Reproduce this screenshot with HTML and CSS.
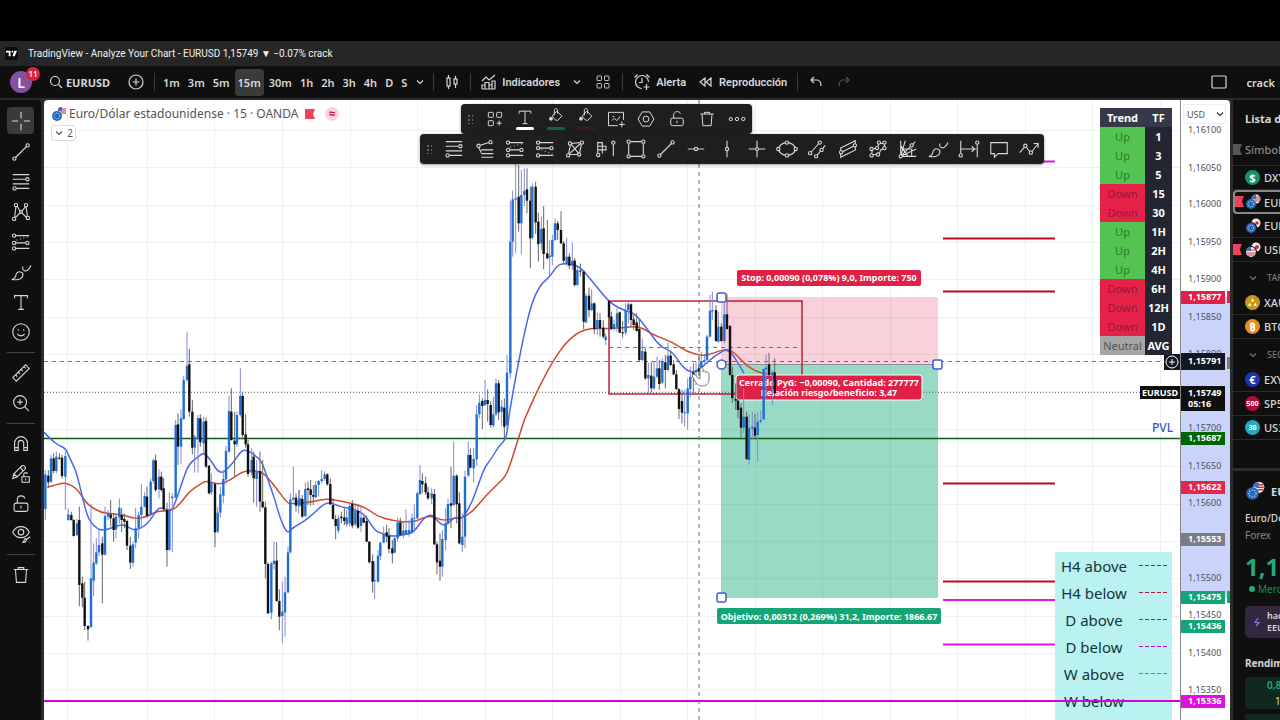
FILE: index.html
```html
<!DOCTYPE html>
<html lang="es">
<head>
    <meta charset="UTF-8">
    <meta name="viewport" content="width=device-width, initial-scale=1.0">
    <title>TradingView - Analyze Your Chart</title>
    <link rel="stylesheet" href="styles.css">
</head>
<body>
    <!-- Icon set -->
    <svg class="sprite" aria-hidden="true">
        <symbol id="i-chevron" viewBox="0 0 10 10"><path d="M2 3.5l3 3 3-3"/></symbol>
        <symbol id="i-line" viewBox="0 0 24 24"><path d="M6 18L18 6"/><circle cx="4.800" cy="19.200" r="1.800"/><circle cx="19.200" cy="4.800" r="1.800"/></symbol>
        <symbol id="i-fib" viewBox="0 0 24 24"><path d="M3 4h18M3 9h14M3 14h18M7 19h14"/><circle cx="19" cy="9" r="1.800"/><circle cx="5" cy="19" r="1.800"/></symbol>
        <symbol id="i-fibext" viewBox="0 0 24 24"><path d="M7 8l9-3M5 10l3 6M8 13h13M8 17h13M8 21h13"/><circle cx="5" cy="8.500" r="1.800"/><circle cx="18" cy="4.500" r="1.800"/></symbol>
        <symbol id="i-pattern" viewBox="0 0 24 24"><path d="M5 18L6.500 6M8 6l3 5M13 13l5 5M6 18l5-5M13 11l4-5M17.500 6.500L19 17"/><circle cx="4.500" cy="19.500" r="1.800"/><circle cx="6.500" cy="4.500" r="1.800"/><circle cx="17.500" cy="4.500" r="1.800"/><circle cx="19.500" cy="18.500" r="1.800"/><circle cx="12" cy="12" r="1.500"/></symbol>
        <symbol id="i-long" viewBox="0 0 24 24"><path d="M6 5h15M6 13h11M6 19h15"/><path stroke-dasharray="1 3" d="M7 10l13-4"/><circle cx="4.500" cy="5" r="1.800"/><circle cx="4.500" cy="13" r="1.800"/><circle cx="19" cy="13" r="1.800"/><circle cx="4.500" cy="19" r="1.800"/></symbol>
        <symbol id="i-short" viewBox="0 0 24 24"><path d="M6 5h15M6 11h11M6 19h15"/><path stroke-dasharray="1 3" d="M8 13l12 4"/><circle cx="4.500" cy="5" r="1.800"/><circle cx="4.500" cy="11" r="1.800"/><circle cx="19" cy="11" r="1.800"/><circle cx="4.500" cy="19" r="1.800"/></symbol>
        <symbol id="i-brush" viewBox="0 0 24 24"><path d="M2 20c4 0 4-4 5-6 2-4 8-2 7 2-1 4-6 5-12 4zM14 6c-1 4 2 6 5 4 2-1 3-3 4-5"/></symbol>
        <symbol id="i-text" viewBox="0 0 24 24"><path d="M5 8V5h14v3M12 5v15M9 20h6"/></symbol>
        <symbol id="i-smile" viewBox="0 0 24 24"><circle cx="12" cy="12" r="9"/><path d="M8 14c1.500 3 6.500 3 8 0M9 9v1.500M15 9v1.500"/></symbol>
        <symbol id="i-ruler" viewBox="0 0 24 24"><path d="M3 17L17 3l4 4L7 21zM6 14l2 2M9 11l2 2M12 8l2 2M15 5l2 2"/></symbol>
        <symbol id="i-zoom" viewBox="0 0 24 24"><circle cx="11" cy="11" r="7"/><path d="M16 16l4.500 4.500M11 8v6M8 11h6"/></symbol>
        <symbol id="i-magnet" viewBox="0 0 24 24"><path d="M5 19v-8a7 7 0 0 1 14 0v8h-4v-8a3 3 0 0 0-6 0v8zM5 16h4M15 16h4"/></symbol>
        <symbol id="i-pencillock" viewBox="0 0 24 24"><path d="M3 17l1-5 9-9c2-1 4 1 4 3l-9 9zM11 5l3 3M4 12l4 3M13 15h8v6h-8zM15 15v-3c1-2 4-2 4 0M17 17v2"/></symbol>
        <symbol id="i-lock" viewBox="0 0 24 24"><rect x="4.500" y="11" width="15" height="9" rx="2"/><path d="M8 11V7c0-5 8-5 8-1M12 14v3"/></symbol>
        <symbol id="i-eye" viewBox="0 0 24 24"><path d="M3 10c4-8 14-8 18 0-2 4-5 6-9 6s-7-2-9-6zM14 21c3 1 5-3 3-4-2 0-1 3-3 4zM18 18l4-3"/><circle cx="12" cy="10" r="3"/></symbol>
        <symbol id="i-trash" viewBox="0 0 24 24"><path d="M4 6h16M9 6V4h6v2M6 6l1 14h10l1-14"/></symbol>
        <symbol id="i-grid" viewBox="0 0 24 24"><rect x="4" y="4" width="6" height="6" rx="1"/><rect x="14" y="4" width="6" height="6" rx="1"/><rect x="4" y="14" width="6" height="6" rx="1"/><rect x="14" y="14" width="6" height="6" rx="1"/></symbol>
        <symbol id="i-gridplus" viewBox="0 0 24 24"><rect x="4" y="4" width="6" height="6" rx="1"/><rect x="14" y="4" width="6" height="6" rx="1"/><rect x="4" y="14" width="6" height="6" rx="1"/><path d="M17 14v6M14 17h6"/></symbol>
        <symbol id="i-bucket" viewBox="0 0 24 24"><path d="M8 10l5-5 6 6-5 5c-2 1-7-4-6-6zM10 10V4c0-3 4-3 4 0v4"/><circle cx="6" cy="14" r="1.800" fill="#ddd"/></symbol>
        <symbol id="i-image" viewBox="0 0 24 24"><path d="M14 20H3V4h18v9M7 14l3-3 3 3 4-5M8 9h2M19 15v7M15.500 18.500h7"/></symbol>
        <symbol id="i-gear" viewBox="0 0 24 24"><path d="M7.500 3.500h9l5 8.500-5 8.500h-9L2.500 12z"/><circle cx="12" cy="12" r="3.500"/></symbol>
        <symbol id="i-more" viewBox="0 0 24 24"><circle cx="4.500" cy="12" r="2"/><circle cx="12" cy="12" r="2"/><circle cx="19.500" cy="12" r="2"/></symbol>
        <symbol id="i-xabcd" viewBox="0 0 24 24"><path d="M5 17L7 8M8 6l9-1M19 7l-2 9M15 18H6M8 7l8 10M6 17L18 6"/><circle cx="4.500" cy="19" r="1.800"/><circle cx="6.500" cy="6" r="1.800"/><circle cx="19.500" cy="5" r="1.800"/><circle cx="16.500" cy="18" r="1.800"/></symbol>
        <symbol id="i-profile" viewBox="0 0 24 24"><path d="M3 4v13M3 5h5v4h4v4H3M3 9h5v8M20 7v13"/><circle cx="3.500" cy="18.500" r="1.800"/><circle cx="20" cy="5" r="1.800"/></symbol>
        <symbol id="i-rect" viewBox="0 0 24 24"><path d="M6 4h12M6 20h12M4 6v12M20 6v12"/><circle cx="4" cy="4" r="1.800"/><circle cx="20" cy="4" r="1.800"/><circle cx="4" cy="20" r="1.800"/><circle cx="20" cy="20" r="1.800"/></symbol>
        <symbol id="i-hline" viewBox="0 0 24 24"><path d="M3 12h7M14 12h7"/><circle cx="12" cy="12" r="1.800"/></symbol>
        <symbol id="i-vline" viewBox="0 0 24 24"><path d="M12 3v7M12 14v7"/><circle cx="12" cy="12" r="1.800"/></symbol>
        <symbol id="i-cross" viewBox="0 0 24 24"><path d="M3 12h7M14 12h7M12 3v7M12 14v7"/><circle cx="12" cy="12" r="1.600"/></symbol>
        <symbol id="i-ellipse" viewBox="0 0 24 24"><ellipse cx="12" cy="12" rx="9" ry="7"/><circle class="knob" cx="2.500" cy="12" r="1.800"/><circle class="knob" cx="21.500" cy="12" r="1.800"/><circle class="knob" cx="12" cy="5" r="1.800"/><circle class="knob" cx="12" cy="19" r="1.800"/></symbol>
        <symbol id="i-parallel" viewBox="0 0 24 24"><path d="M6 15l8-9M12 19l4-5 5-6"/><circle cx="4.500" cy="16.500" r="1.800"/><circle cx="15" cy="5" r="1.800"/><circle cx="11" cy="20" r="1.800"/><circle class="knob" cx="17" cy="13" r="1.800"/></symbol>
        <symbol id="i-channel" viewBox="0 0 24 24"><path d="M4 11l16-8v10L4 21zM4 16l16-8"/><circle class="knob" cx="4.500" cy="15.500" r="1.800"/><circle class="knob" cx="19.500" cy="8" r="1.800"/></symbol>
        <symbol id="i-path" viewBox="0 0 24 24"><path d="M5 18l1-6 5-1 2-5 6 0v5l-4 2-2 5z"/><circle class="knob" cx="5" cy="19" r="1.800"/><circle class="knob" cx="5" cy="12" r="1.800"/><circle class="knob" cx="11" cy="11" r="1.800"/><circle class="knob" cx="13" cy="5" r="1.800"/><circle class="knob" cx="19" cy="5" r="1.800"/><circle class="knob" cx="19" cy="11" r="1.800"/><circle class="knob" cx="12" cy="18" r="1.800"/></symbol>
        <symbol id="i-fan" viewBox="0 0 24 24"><path d="M4 3v17h17M4 20L9 3M4 20L20 4M4 20l17-8M4 12h12v8M4 8l8 12"/><circle class="knob" cx="4" cy="20" r="1.800"/><circle class="knob" cx="16" cy="8" r="1.800"/></symbol>
        <symbol id="i-range" viewBox="0 0 24 24"><path d="M3 3v14M21 7v14M3 12h17M15 9l3 3-3 3"/><circle cx="3" cy="19" r="1.800"/><circle cx="21" cy="5" r="1.800"/></symbol>
        <symbol id="i-note" viewBox="0 0 24 24"><path d="M3 5h18v12H11l-4 4v-4H3z"/></symbol>
        <symbol id="i-trend" viewBox="0 0 24 24"><path d="M2 16l5-6M9 10l4 5M15 15l7-9M17 6h5v5"/><circle cx="8" cy="8.500" r="1.800"/><circle cx="14" cy="16" r="1.800"/></symbol>
        <symbol id="eu" viewBox="0 0 16 16"><circle cx="11" cy="5" r="4.500" fill="#eee" stroke="none"/><path stroke="#d33" d="M9 3h6M9 5h6M10 7h5"/><path stroke="none" fill="#3b6fc4" d="M7 3c1-2 2-2 4-2v4H7z"/><circle cx="6" cy="10" r="5" fill="#2468b4" stroke="none"/><circle cx="6" cy="10" r="2.800" stroke="#9cc8f0" stroke-dasharray="1 1"/></symbol>
        <symbol id="eujp" viewBox="0 0 16 16"><circle cx="11" cy="5" r="4.500" fill="#eee" stroke="none"/><circle cx="12" cy="5" r="1.800" fill="#d24" stroke="none"/><circle cx="6" cy="10" r="5.500" fill="#2468b4" stroke="#111"/><circle cx="6" cy="10" r="2.800" stroke="#9cc8f0" stroke-dasharray="1 1"/></symbol>
        <symbol id="usjp" viewBox="0 0 16 16"><circle cx="11" cy="5" r="4.500" fill="#eee" stroke="none"/><circle cx="12" cy="5" r="2" fill="#d24" stroke="none"/><circle cx="6" cy="10" r="5.500" fill="#eee" stroke="#111"/><path stroke="#d33" d="M6 8h5M2 11h9M3 13h6"/><path stroke="none" fill="#3b6fc4" d="M1 9c0-2 2-4 5-4v4z"/></symbol>
    </svg>

    <div class="letterbox"></div>

    <header class="titlebar">
        <svg class="logo" viewBox="0 0 14 14"><rect width="14" height="14" rx="2" fill="#0c0c0c" stroke="none"/><path fill="#fff" stroke="none" d="M1 4h5v6H4V6H1zM10 4h3l-2.500 6H8z"/><circle cx="8" cy="5" r="1" fill="#fff" stroke="none"/></svg>
        <span>TradingView - Analyze Your Chart - EURUSD 1,15749 ▼ −0.07% crack</span>
    </header>

    <!-- Main toolbar -->
    <nav class="toolbar">
        <button class="avatar">L<span class="badge">11</span></button>
        <button class="symbol-search"><svg class="icon16" viewBox="0 0 16 16"><circle cx="7" cy="7" r="4.500"/><path d="M10.500 10.500L14 14"/></svg>EURUSD</button>
        <button class="add" aria-label="Comparar"><svg class="icon16" viewBox="0 0 16 16"><circle cx="8" cy="8" r="7"/><path d="M8 4.500v7M4.500 8h7"/></svg></button>
        <span class="sep"></span>
        <div class="intervals">
            <button>1m</button>
            <button>3m</button>
            <button>5m</button>
            <button class="active">15m</button>
            <button>30m</button>
            <button>1h</button>
            <button>2h</button>
            <button>3h</button>
            <button>4h</button>
            <button>D</button>
            <button>S</button>
            <button aria-label="Intervalos"><svg class="icon10"><use href="#i-chevron"/></svg></button>
        </div>
        <span class="sep"></span>
        <button class="tool" aria-label="Velas"><svg class="icon16" viewBox="0 0 16 16"><path d="M4.500 1v3M4.500 12v3M11.500 2v3M11.500 10v4"/><rect x="3" y="4" width="3" height="8"/><rect x="10" y="5" width="3" height="5"/></svg></button>
        <span class="sep"></span>
        <button class="tool"><svg class="icon16" viewBox="0 0 16 16"><path d="M1 15V11h3v4M4 15V8.500h4V15M8 11h3v4M11 15V7h3v8M1 15h13M1 7l4-4 3 3 6-5"/></svg>Indicadores</button>
        <button class="tool" aria-label="Favoritos"><svg class="icon10"><use href="#i-chevron"/></svg></button>
        <button class="tool" aria-label="Plantillas"><svg class="icon18"><use href="#i-grid"/></svg></button>
        <span class="sep"></span>
        <button class="tool"><svg class="icon18" viewBox="0 0 18 18"><path d="M9 15.500A6.500 6.500 0 1 1 15.500 9M9 5v4.500H6M1.500 4.500l3-3M13.500 1.500l3 3M13.500 11v6M10.500 14h6"/></svg>Alerta</button>
        <button class="tool"><svg class="icon16" viewBox="0 0 16 16"><path d="M7 4v8L2 8zM13 4v8L8 8z"/></svg>Reproducción</button>
        <span class="sep"></span>
        <button class="tool undo" aria-label="Deshacer"><svg class="icon16" viewBox="0 0 16 16"><path d="M6 3L3 6l3 3M3 6h6c3 0 4 2 4 6"/></svg></button>
        <button class="tool redo" aria-label="Rehacer"><svg class="icon16" viewBox="0 0 16 16"><path d="M10 3l3 3-3 3M13 6H7c-3 0-4 2-4 6"/></svg></button>
        <div class="layout-name">
            <svg class="icon16" viewBox="0 0 16 16"><rect x="1" y="2" width="14" height="12" rx="1"/></svg>
            <button>crack</button>
        </div>
    </nav>

    <div class="workspace">
        <!-- Drawing tools -->
        <aside class="drawbar">
            <button class="active" aria-label="Cruz"><svg viewBox="0 0 24 24"><path d="M12 2v7M12 15v7M2 12h7M15 12h7"/></svg></button>
            <button aria-label="Línea"><svg><use href="#i-line"/></svg></button>
            <button aria-label="Fibonacci"><svg><use href="#i-fib"/></svg></button>
            <button aria-label="Patrones"><svg><use href="#i-pattern"/></svg></button>
            <button aria-label="Previsión"><svg><use href="#i-long"/></svg></button>
            <button aria-label="Pincel"><svg><use href="#i-brush"/></svg></button>
            <button aria-label="Texto"><svg><use href="#i-text"/></svg></button>
            <button aria-label="Iconos"><svg><use href="#i-smile"/></svg></button>
            <hr>
            <button aria-label="Medir"><svg><use href="#i-ruler"/></svg></button>
            <button aria-label="Ampliar"><svg><use href="#i-zoom"/></svg></button>
            <hr>
            <button aria-label="Imán"><svg><use href="#i-magnet"/></svg></button>
            <button aria-label="Modo dibujo"><svg><use href="#i-pencillock"/></svg></button>
            <button aria-label="Bloquear"><svg><use href="#i-lock"/></svg></button>
            <button aria-label="Ocultar"><svg><use href="#i-eye"/></svg></button>
            <hr>
            <button aria-label="Eliminar"><svg><use href="#i-trash"/></svg></button>
        </aside>

        <main class="chart">
            <div class="pane">
                <svg class="plot" viewBox="44 100 1136 620" preserveAspectRatio="xMinYMin slice">
                    <g id="grid" class="gridlines"></g>
                    <!-- Short position -->
                    <rect class="stop-zone" x="721" y="297" width="217" height="67"/>
                    <rect class="target-zone" x="721" y="364" width="217" height="234"/>
                    <path class="zone-edge" d="M721 364.500h217"/>
                    <g id="grid-over" class="gridlines-over"></g>
                    <!-- Levels -->
                    <path class="level-green" d="M44 438.500h1136"/>
                    <path class="level-dotted" d="M44 392.500h1096"/>
                    <path class="level-red" d="M943 238.500h112M943 291.500h112M943 483.500h112M943 581.500h112"/>
                    <path class="level-magenta" d="M943 161.500h112M943 600h112M943 644.500h112"/>
                    <g id="averages"></g>
                    <rect class="box" x="609" y="301" width="193" height="93"/>
                    <path class="box-mid" d="M609 347.500h193"/>
                    <path class="crosshair" d="M44 361.500h1120M699 100v620"/>
                    <!-- Position labels -->
                    <rect class="label-red" x="737" y="270" width="184" height="16" rx="2"/>
                    <text class="label-text" x="829" y="281">Stop: 0,00090 (0,078%) 9,0, Importe: 750</text>
                    <rect class="label-red outlined" x="736" y="375" width="186" height="25" rx="3"/>
                    <text class="label-text" x="829" y="386">Cerrado PyG: −0,00090, Cantidad: 277777</text>
                    <text class="label-text" x="829" y="396">Relación riesgo/beneficio: 3,47</text>
                    <rect class="label-green" x="717" y="608" width="224" height="16" rx="2"/>
                    <text class="label-text" x="829" y="620">Objetivo: 0,00312 (0,269%) 31,2, Importe: 1866.67</text>
                    <g id="candles"></g>
                    <g class="handles">
                        <rect x="717" y="293" width="9" height="9" rx="2"/>
                        <circle cx="721.500" cy="364.500" r="4.500"/>
                        <rect x="933" y="360" width="9" height="9" rx="2"/>
                        <rect x="717" y="593" width="9" height="9" rx="2"/>
                    </g>
                    <path class="hand" d="M692 375c2-2 4 0 5 2l3 2v-10c1-2 3-1 3 0v3c1-2 3-1 3 1 1-2 3-1 3 1v6c0 4-3 6-7 6-5 0-7-4-10-11z"/>
                    <text class="pvl" x="1152" y="432">PVL</text>
                    <rect x="1140" y="386" width="40" height="13" fill="#0f0f0f" stroke="none"/>
                    <text class="label-text" x="1160" y="396">EURUSD</text>
                    <rect x="1164" y="354" width="16" height="16" fill="#131722" stroke="none"/>
                    <path class="plus" d="M1172 359v6M1169 362h6M1178 362a6 6 0 1 1-12 0 6 6 0 1 1 12 0"/>
                </svg>

                <div class="legend">
                    <svg class="pair"><use href="#eu"/></svg>
                    <span>Euro/Dólar estadounidense · 15 · OANDA</span>
                    <svg class="flag" viewBox="0 0 10 10"><path d="M0 0h10L8 5l2 5H0z"/></svg>
                    <span class="approx">≈</span>
                </div>
                <button class="collapse"><svg class="icon10"><use href="#i-chevron"/></svg>2</button>

                <table class="trend">
                    <thead><tr><th>Trend</th><th>TF</th></tr></thead>
                    <tbody>
                        <tr><td class="up">Up</td><td>1</td></tr>
                        <tr><td class="up">Up</td><td>3</td></tr>
                        <tr><td class="up">Up</td><td>5</td></tr>
                        <tr><td class="down">Down</td><td>15</td></tr>
                        <tr><td class="down">Down</td><td>30</td></tr>
                        <tr><td class="up">Up</td><td>1H</td></tr>
                        <tr><td class="up">Up</td><td>2H</td></tr>
                        <tr><td class="up">Up</td><td>4H</td></tr>
                        <tr><td class="down">Down</td><td>6H</td></tr>
                        <tr><td class="down">Down</td><td>12H</td></tr>
                        <tr><td class="down">Down</td><td>1D</td></tr>
                        <tr><td class="neutral">Neutral</td><td>AVG</td></tr>
                    </tbody>
                </table>

                <div class="keys">
                    <div class="key"><span>H4 above</span><i class="dash-red"></i></div>
                    <div class="key"><span>H4 below</span><i class="dash-red"></i></div>
                    <div class="key"><span>D above</span><i class="dash-magenta"></i></div>
                    <div class="key"><span>D below</span><i class="dash-magenta"></i></div>
                    <div class="key"><span>W above</span><i class="dash-green"></i></div>
                    <div class="key"><span>W below</span><i class="dash-gray"></i></div>
                </div>
                <div class="week-line"></div>

                <!-- Floating toolbars -->
                <div class="floating format">
                    <span class="grip"></span>
                    <button aria-label="Plantilla"><svg><use href="#i-gridplus"/></svg></button>
                    <button class="ink-white" aria-label="Texto"><svg><use href="#i-text"/></svg></button>
                    <button class="ink-green" aria-label="Color objetivo"><svg><use href="#i-bucket"/></svg></button>
                    <button class="ink-red" aria-label="Color stop"><svg><use href="#i-bucket"/></svg></button>
                    <button aria-label="Imagen"><svg><use href="#i-image"/></svg></button>
                    <button aria-label="Ajustes"><svg><use href="#i-gear"/></svg></button>
                    <button aria-label="Bloquear"><svg><use href="#i-lock"/></svg></button>
                    <button aria-label="Eliminar"><svg><use href="#i-trash"/></svg></button>
                    <button aria-label="Más"><svg><use href="#i-more"/></svg></button>
                </div>
                <div class="floating favorites">
                    <span class="grip"></span>
                    <button aria-label="Retroceso"><svg><use href="#i-fib"/></svg></button>
                    <button aria-label="Extensión"><svg><use href="#i-fibext"/></svg></button>
                    <button aria-label="Posición larga"><svg><use href="#i-long"/></svg></button>
                    <button aria-label="Posición corta"><svg><use href="#i-short"/></svg></button>
                    <button aria-label="XABCD"><svg><use href="#i-xabcd"/></svg></button>
                    <button aria-label="Perfil"><svg><use href="#i-profile"/></svg></button>
                    <button aria-label="Rectángulo"><svg><use href="#i-rect"/></svg></button>
                    <button aria-label="Línea"><svg><use href="#i-line"/></svg></button>
                    <button aria-label="Horizontal"><svg><use href="#i-hline"/></svg></button>
                    <button aria-label="Vertical"><svg><use href="#i-vline"/></svg></button>
                    <button aria-label="Cruzada"><svg><use href="#i-cross"/></svg></button>
                    <button aria-label="Elipse"><svg><use href="#i-ellipse"/></svg></button>
                    <button aria-label="Paralelas"><svg><use href="#i-parallel"/></svg></button>
                    <button aria-label="Canal"><svg><use href="#i-channel"/></svg></button>
                    <button aria-label="Trayectoria"><svg><use href="#i-path"/></svg></button>
                    <button aria-label="Gann"><svg><use href="#i-fan"/></svg></button>
                    <button aria-label="Pincel"><svg><use href="#i-brush"/></svg></button>
                    <button aria-label="Rango"><svg><use href="#i-range"/></svg></button>
                    <button aria-label="Nota"><svg><use href="#i-note"/></svg></button>
                    <button aria-label="Tendencia"><svg><use href="#i-trend"/></svg></button>
                </div>
            </div>

            <!-- Price scale -->
            <div class="scale">
                <svg class="scale-plot" viewBox="0 100 49 620" preserveAspectRatio="xMinYMin slice">
                    <rect class="band" x="0" y="297" width="49" height="301"/>
                    <g id="prices"></g>
                </svg>
                <select class="currency" aria-label="Moneda"><option>USD</option></select>
                <svg class="currency-arrow icon10"><use href="#i-chevron"/></svg>
            </div>
        </main>

        <!-- Watchlist -->
        <aside class="side">
            <section class="watchlist">
                <h2>Lista de</h2>
                <div class="columns"><i class="mark muted"></i>Símbolo</div>
                <div class="row"><b class="coin c-green">$</b>DXY</div>
                <div class="row selected"><i class="mark"></i><svg class="pair"><use href="#eu"/></svg>EURUSD</div>
                <div class="row"><svg class="pair"><use href="#eujp"/></svg>EURJPY</div>
                <div class="row"><i class="mark"></i><svg class="pair"><use href="#usjp"/></svg>USDJPY</div>
                <div class="group"><svg class="icon10"><use href="#i-chevron"/></svg>TAR</div>
                <div class="row"><b class="coin c-gold"><svg viewBox="0 0 10 10"><path d="M5 1l1.500 3h-3zM2.500 5L4 8H1zM7.500 5L9 8H6z"/></svg></b>XAUUSD</div>
                <div class="row"><b class="coin c-orange">₿</b>BTCUSD</div>
                <div class="group"><svg class="icon10"><use href="#i-chevron"/></svg>SEC</div>
                <div class="row"><b class="coin c-blue">€</b>EXY</div>
                <div class="row"><b class="coin c-red small">500</b>SP500</div>
                <div class="row"><b class="coin c-cyan small">30</b>US30</div>
            </section>
            <section class="details">
                <div class="head"><svg class="pair big"><use href="#eu"/></svg>EURUSD</div>
                <div class="name">Euro/Dólar</div>
                <div class="kind">Forex</div>
                <div class="price">1,15749</div>
                <div class="status"><i></i>Mercado</div>
                <div class="news"><svg class="icon10" viewBox="0 0 10 10"><path d="M6 1L3 5.500h4L4 9"/></svg><span>hace<br>EEUU</span></div>
                <h3>Rendimiento</h3>
                <div class="tile"><em>0,85%</em><span>1S</span></div>
                <div class="tile"></div>
            </section>
        </aside>
    </div>

    <script src="chart.js"></script>
</body>
</html>
```
FILE: styles.css
```css
* {
    box-sizing: border-box;
}
body {
    margin: 0;
    height: 100vh;
    display: flex;
    flex-direction: column;
    overflow: hidden;
    background: #2b2b2b;
    color: #d8d8d8;
    font-family: "Noto Sans", "Open Sans", sans-serif;
    font-size: 12px;
}
svg {
    display: block;
    flex: none;
    fill: none;
    stroke: currentColor;
    stroke-width: 1.2;
}
text {
    stroke: none;
}
button {
    display: flex;
    align-items: center;
    justify-content: center;
    padding: 0;
    border: none;
    background: none;
    color: inherit;
    font: inherit;
    cursor: pointer;
}
.sprite {
    position: absolute;
    width: 0;
    height: 0;
}
.icon10 { width: 10px; height: 10px; }
.icon16 { width: 16px; height: 16px; }
.icon18 { width: 18px; height: 18px; }
.knob { fill: #1e1e1e; }

/* Top bars */
.letterbox {
    height: 41px;
    flex: none;
    background: #000;
}
.titlebar {
    height: 25px;
    flex: none;
    display: flex;
    align-items: center;
    gap: 10px;
    padding-left: 5px;
    background: #262626;
    color: #f0f0f0;
    font-family: Roboto, sans-serif;
    font-size: 10px;
    white-space: nowrap;
}
.logo {
    width: 13px;
    height: 13px;
}
.toolbar {
    height: 32px;
    flex: none;
    display: flex;
    align-items: center;
    padding-left: 10px;
    margin-bottom: 2px;
    background: #0f0f0f;
    font-size: 11px;
    font-weight: 600;
    white-space: nowrap;
}
.avatar {
    position: relative;
    width: 22px;
    height: 22px;
    border-radius: 50%;
    background: #8450a0;
    color: #fff;
    font-size: 14px;
}
.badge {
    position: absolute;
    top: -4px;
    right: -8px;
    width: 14px;
    height: 14px;
    border-radius: 50%;
    background: #d8243f;
    font-size: 8px;
    line-height: 14px;
}
.symbol-search {
    gap: 2px;
    width: 60px;
    margin-left: 17px;
    font-size: 11px;
    font-weight: 700;
}
.add {
    margin-left: 19px;
}
.sep {
    width: 1px;
    height: 18px;
    margin: 0 10px;
    background: #3c3c3c;
}
.intervals {
    display: flex;
    gap: 2px;
    margin: 0 -5px;
}
.intervals button {
    height: 27px;
    padding: 0 3px;
    border-radius: 4px;
}
.intervals .active {
    background: #3a3a3a;
}
.tool {
    gap: 5px;
    font-family: Roboto, sans-serif;
}
.tool + .tool {
    margin-left: 12px;
}
.redo {
    color: #555;
}
.layout-name {
    display: flex;
    gap: 19px;
    margin-left: auto;
    padding-right: 5px;
}

/* Left toolbar */
.workspace {
    flex: 1;
    min-height: 0;
    display: flex;
    gap: 3px;
}
.drawbar {
    width: 41px;
    padding-top: 7px;
    display: flex;
    flex-direction: column;
    align-items: center;
    background: #0f0f0f;
    border-top-right-radius: 4px;
}
.drawbar button {
    width: 27px;
    height: 30px;
    border-radius: 4px;
}
.drawbar .active {
    height: 27px;
    margin-bottom: 3px;
    background: #3a3a3a;
}
.drawbar svg {
    width: 22px;
    height: 22px;
}
.drawbar hr {
    width: 28px;
    height: 1px;
    margin: 5px 0;
    border: none;
    background: #444;
}

/* Chart */
.chart {
    flex: 1;
    min-width: 0;
    display: flex;
    background: #fff;
    border-radius: 4px 4px 0 0;
    overflow: hidden;
}
.pane {
    position: relative;
    flex: 1;
    min-width: 0;
    overflow: hidden;
}
.plot, .scale-plot {
    width: 100%;
    height: 100%;
}
.gridlines { stroke: #eef0f2; stroke-width: 1; }
.gridlines-over { stroke: rgba(40, 60, 60, 0.07); stroke-width: 1; }
.stop-zone { fill: #f9d1da; stroke: none; }
.target-zone { fill: #99dac6; stroke: none; }
.zone-edge { stroke: #8b8f96; stroke-width: 1; }
.level-green { stroke: #0a5c10; stroke-width: 1.5; }
.level-dotted { stroke: #777; stroke-width: 1; stroke-dasharray: 1 2; }
.level-red { stroke: #b3101c; stroke-width: 2; }
.level-magenta { stroke: #d81bd8; stroke-width: 2; }
.average-fast { stroke: #4a66ea; stroke-width: 1.5; }
.average-slow { stroke: #d2492a; stroke-width: 1.5; }
.box { stroke: #b8142c; stroke-width: 1.4; }
.box-mid { stroke: #c8455a; stroke-width: 1; stroke-dasharray: 4 4; }
.crosshair { stroke: #6a6d75; stroke-width: 1; stroke-dasharray: 4 4; }
.wick-up { stroke: #8389d8; stroke-width: 1; }
.wick-down { stroke: #666; stroke-width: 1; }
.body-up { fill: #1f6fd2; stroke: none; }
.body-down { fill: #111; stroke: none; }
.label-red { fill: #e02045; stroke: none; }
.label-green { fill: #14a577; stroke: none; }
.label-red.outlined { stroke: #fff; stroke-width: 1; }
.label-text {
    fill: #fff;
    font-size: 9px;
    font-weight: 700;
    text-anchor: middle;
}
.handles { fill: #fff; stroke: #3f5bd8; stroke-width: 1.5; }
.hand { fill: #fff; stroke: #777; stroke-width: 1; }
.pvl { fill: #3550d8; font-size: 12px; font-weight: 500; }
.plus { stroke: #fff; stroke-width: 1; }

.legend {
    position: absolute;
    top: 5px;
    left: 7px;
    display: flex;
    align-items: center;
    gap: 2px;
    color: #555;
    font-size: 12px;
    white-space: nowrap;
}
.pair {
    width: 16px;
    height: 16px;
}
.legend .flag {
    width: 10px;
    height: 10px;
    margin: 0 8px 0 5px;
    fill: #f0405c;
    stroke: none;
}
.approx {
    width: 14px;
    height: 14px;
    border-radius: 50%;
    background: #fad3e2;
    color: #c2185b;
    line-height: 13px;
    text-align: center;
    font-weight: 700;
}
.collapse {
    position: absolute;
    top: 25px;
    left: 7px;
    width: 25px;
    height: 16px;
    gap: 3px;
    border: 1px solid #ddd;
    border-radius: 3px;
    background: #fff;
    color: #555;
    font-size: 10px;
}
.trend {
    position: absolute;
    top: 8px;
    right: 8px;
    width: 72px;
    border-collapse: collapse;
    background: #232533;
    color: #fff;
    font-size: 11px;
    line-height: 19px;
    text-align: center;
}
.trend th, .trend td {
    padding: 0;
    height: 19px;
    font-weight: 700;
}
.trend th {
    background: #363948;
}
.trend th:first-child {
    width: 45px;
}
.trend td:first-child {
    font-weight: 400;
}
.trend .up { background: #53c452; color: #2b7a2e; }
.trend .down { background: #e72249; color: #93183a; }
.trend .neutral { background: #a5a5a5; color: #555; }

.keys {
    position: absolute;
    top: 452px;
    right: 8px;
    bottom: 0;
    width: 117px;
    overflow: hidden;
    background: #b9f2f1;
    color: #16323a;
    font-size: 15px;
}
.key {
    display: flex;
    align-items: center;
    justify-content: space-between;
    height: 27px;
    padding-right: 5px;
}
.key span {
    width: 78px;
    text-align: center;
    white-space: nowrap;
}
.key i {
    width: 28px;
    height: 1px;
    background: repeating-linear-gradient(90deg, currentColor 0 4px, transparent 4px 6px);
}
.dash-red { color: #b01840; }
.dash-magenta { color: #b010d0; }
.dash-green { color: #2cb93a; }
.dash-gray { color: #8b8fb5; }
.week-line {
    position: absolute;
    top: 600px;
    left: 0;
    right: 0;
    height: 2px;
    background: #d800d8;
}

/* Floating toolbars */
.floating {
    position: absolute;
    height: 30px;
    display: flex;
    align-items: center;
    justify-content: space-between;
    padding: 0 3px 0 6px;
    border-radius: 4px;
    background: #1e1e1e;
    box-shadow: 0 1px 3px rgba(0,0,0,0.4);
}
.format {
    top: 4px;
    left: 417px;
    width: 291px;
}
.favorites {
    top: 34px;
    left: 376px;
    width: 624px;
}
.floating button {
    width: 24px;
    height: 26px;
}
.floating svg {
    width: 22px;
    height: 22px;
}
.format svg {
    width: 20px;
    height: 20px;
}
.grip {
    width: 6px;
    height: 10px;
    margin-right: 4px;
    background: radial-gradient(circle, #666 1px, transparent 1px) 0 0 / 4px 4px;
}
.ink-white, .ink-green, .ink-red {
    flex-direction: column;
}
.ink-white svg, .ink-green svg, .ink-red svg {
    margin-top: -2px;
}
.ink-white::after, .ink-green::after, .ink-red::after {
    content: "";
    width: 18px;
    height: 3px;
    border-radius: 2px;
    background: #fff;
}
.ink-green::after { background: #175c46; }
.ink-red::after { background: #4a1420; }

/* Price scale */
.scale {
    position: relative;
    width: 50px;
    border-left: 1px solid #888;
}
.band { fill: #cad4fb; stroke: none; }
.tick {
    fill: #4c4f58;
    font-size: 9px;
}
.tag-text {
    fill: #fff;
    font-size: 9px;
    font-weight: 700;
}
.tag {
    stroke: none;
}
.currency {
    position: absolute;
    top: 4px;
    left: 2px;
    width: 43px;
    height: 20px;
    padding: 0 0 0 3px;
    appearance: none;
    border: 1px solid #eee;
    border-radius: 3px;
    background: #fff;
    color: #555;
    font-family: inherit;
    font-size: 9px;
}
.currency-arrow {
    position: absolute;
    top: 9px;
    right: 5px;
    color: #333;
}

/* Right panel */
.side {
    width: 47px;
    display: flex;
    flex-direction: column;
    gap: 3px;
    overflow: hidden;
    white-space: nowrap;
}
.watchlist {
    height: 368px;
    flex: none;
    background: #0f0f0f;
    font-size: 11px;
    font-weight: 500;
}
.watchlist h2 {
    margin: 0;
    padding-left: 12px;
    font-size: 11px;
    line-height: 38px;
}
.columns {
    position: relative;
    height: 28px;
    padding-left: 12px;
    border-bottom: 1px solid #2b2b2b;
    color: #888;
    font-size: 11px;
    line-height: 23px;
}
.row {
    position: relative;
    height: 24px;
    display: flex;
    align-items: center;
    gap: 4px;
    padding-left: 12px;
    border-bottom: 1px solid #2b2b2b;
}
.row.selected {
    border: 2px solid #888;
    border-right: none;
    border-radius: 4px 0 0 4px;
    padding-left: 10px;
}
.mark {
    position: absolute;
    left: 0;
    top: 6px;
    width: 9px;
    height: 11px;
    background: #f0405c;
    clip-path: polygon(0 0, 100% 0, 75% 50%, 100% 100%, 0 100%);
}
.mark.muted {
    background: #555;
}
.selected .mark {
    top: 4px;
}
.coin {
    width: 15px;
    height: 15px;
    flex: none;
    border-radius: 50%;
    color: #fff;
    font-size: 11px;
    line-height: 15px;
    text-align: center;
}
.coin.small { font-size: 7px; }
.coin svg {
    width: 15px;
    height: 15px;
    padding: 2px;
    fill: #fff;
    stroke: none;
}
.row .pair { margin-right: -1px; }
.c-green { background: #129468; }
.c-gold { background: #c9981b; }
.c-orange { background: #ea8e24; }
.c-blue { background: #1c35b5; }
.c-red { background: #b40a38; }
.c-cyan { background: #24a9c6; }
.group {
    height: 29px;
    display: flex;
    align-items: center;
    gap: 9px;
    padding: 2px 0 0 15px;
    color: #777;
    font-size: 9px;
}
.details {
    flex: 1;
    padding: 8px 0 0 12px;
    background: #0f0f0f;
}
.head {
    display: flex;
    align-items: center;
    gap: 6px;
    height: 24px;
    font-size: 11px;
    font-weight: 700;
}
.pair.big {
    width: 20px;
    height: 20px;
}
.name {
    margin-top: 6px;
    font-size: 10px;
    line-height: 18px;
    font-weight: 500;
}
.kind {
    color: #888;
    font-size: 10px;
    line-height: 16px;
}
.price {
    margin-top: 8px;
    color: #26a880;
    font-size: 24px;
    line-height: 32px;
    font-weight: 700;
}
.status {
    display: flex;
    align-items: center;
    gap: 3px;
    padding-left: 4px;
    color: #159063;
    font-size: 10px;
    line-height: 12px;
}
.status i {
    width: 6px;
    height: 6px;
    flex: none;
    border-radius: 50%;
    background: #26a880;
}
.news {
    display: flex;
    align-items: center;
    gap: 5px;
    height: 32px;
    margin-top: 11px;
    padding-left: 7px;
    border-radius: 5px 0 0 5px;
    background: #32283f;
    font-size: 9px;
    line-height: 12px;
    font-weight: 600;
}
.news svg { color: #a06bea; }
.details h3 {
    margin: 16px 0 5px;
    font-size: 10px;
    line-height: 18px;
}
.tile {
    height: 32px;
    display: flex;
    flex-direction: column;
    padding-left: 22px;
    margin-bottom: 5px;
    border-radius: 3px 0 0 3px;
    background: #10281f;
    font-size: 10px;
    line-height: 16px;
}
.tile em {
    color: #26a880;
    font-style: normal;
    font-weight: 600;
}
.tile span { padding-left: 8px; }
```
FILE: chart.js
```js
const NS = 'http://www.w3.org/2000/svg';

function draw(parent, tag, attrs, text) {
    const node = document.createElementNS(NS, tag);
    for (const key in attrs) node.setAttribute(key, attrs[key]);
    if (text) node.textContent = text;
    document.getElementById(parent).appendChild(node);
}

// Grid
[67.5, 147.5, 214.5, 282.5, 350.5, 417.5, 485.5, 552.5, 620.5, 687.5, 755.5, 822.5, 890.5, 957.5, 1025.5, 1092.5, 1160.5]
    .forEach(x => draw('grid', 'path', { d: `M${x} 100v620` }));
[755.5, 822.5, 890.5].forEach(x => draw('grid-over', 'path', { d: `M${x} 297v301` }));
for (let i = 0; i < 16; i++) {
    const y = Math.round(130 + i * 37.35) + 0.5;
    draw('grid', 'path', { d: `M44 ${y}h1136` });
    if (y > 297 && y < 598) draw('grid-over', 'path', { d: `M721 ${y}h217` });
}

// Sessions: origin in the plot, three units per plot unit.
// Candle: x, high, body top, body bottom, low, direction
const sessions = [
    { x: 44, y: 320, candles: `
4 450 463 567 600 u|13 450 467 487 503 d|21 405 415 485 490 u|29 400 415 453 460 d|37 395 410 453 460 u|46 400 413 415 420 d|54 405 413 468 475 d|64 395 408 470 570 u
73 565 583 600 602 u|82 575 585 600 602 d|89 597 600 648 650 d|99 597 610 645 648 u|106 560 600 795 858 d|115 770 790 833 862 d|122 785 833 918 930 d|132 915 918 928 962 d
141 553 775 921 925 u|149 670 728 782 828 u|157 655 697 730 735 u|165 630 675 697 708 u|175 650 670 704 850 d|183 560 588 704 706 u|192 570 580 590 600 u|200 540 583 595 620 d
209 580 595 630 665 d|216 580 590 628 655 u|226 535 563 592 610 u|233 565 585 600 636 d|241 580 597 605 625 d|249 600 603 677 690 d|259 650 677 728 747 d|267 665 673 728 740 u
275 563 625 668 685 u|284 575 585 625 655 u|292 492 560 585 625 u|302 517 528 560 563 u|309 500 530 588 592 d|320 475 485 585 590 u|328 415 421 483 490 u|335 403 421 510 515 d
345 448 470 508 535 u|352 455 470 510 515 d|359 475 505 568 575 d|369 548 570 690 740 d|376 517 570 690 692 u|385 520 530 535 697 u|395 300 315 533 535 u|402 280 313 380 435 d
411 268 295 380 433 u|419 168 180 297 300 u|429 35 138 180 185 u|436 87 133 275 290 d|445 240 275 383 403 d|452 345 350 383 458 u|462 285 294 358 458 u|469 283 295 367 380 d
479 290 305 370 405 u|486 293 303 440 443 d|495 435 437 520 523 d|502 460 487 517 525 u|513 488 492 637 682 d|521 560 578 635 640 u|529 500 523 578 592 u|538 450 477 527 550 u
546 378 393 478 493 u|555 228 273 395 398 u|562 205 275 360 362 d|572 275 362 373 470 d|579 275 285 373 380 u|589 145 227 285 290 u|596 215 228 345 353 d|605 283 343 373 383 d
612 360 373 462 470 d|623 385 420 458 467 u|629 395 410 475 548 d|638 420 455 477 560 u|648 395 453 545 575 d|656 420 545 562 565 d|664 545 562 732 775 d|672 728 732 880 882 d
682 725 730 878 898 u|690 665 722 732 748 u|698 667 722 843 845 d|706 808 843 890 930 d|715 785 875 888 970 u|723 770 817 877 950 u|732 680 697 817 820 u|739 520 538 697 700 u
748 440 533 538 545 u|756 520 533 557 575 d|764 510 540 557 580 u|772 535 540 557 560 d` },
    { x: 290, y: 380, candles: `
29 330 355 375 380 u|37 345 357 410 413 d|46 307 327 408 412 u|54 305 325 330 375 d|62 300 328 345 377 d|70 315 345 350 375 d|77 303 315 352 355 u|86 300 303 315 350 u
95 270 297 303 310 u|104 275 283 297 303 u|112 280 283 313 317 d|121 295 312 373 375 d|129 355 375 417 418 d|137 405 417 438 478 d|145 405 415 452 460 u|154 395 410 415 430 d
163 383 412 423 435 d|170 390 412 433 440 u|179 370 378 430 440 u|187 360 372 437 445 d|196 375 392 433 437 u|204 375 393 443 447 d|213 380 413 438 455 u|221 410 413 428 430 d
230 407 423 485 487 d|238 483 485 547 550 d|248 523 543 605 638 d|254 545 600 603 657 u|264 510 527 605 607 u|271 485 488 528 540 u|281 440 462 488 490 u|290 435 457 470 487 d
297 445 468 507 520 d|307 480 505 520 550 d|314 465 475 518 520 u|323 413 427 475 485 u|331 413 427 465 468 d|340 425 452 465 475 u|348 388 450 463 465 u|357 420 450 463 470 u
366 400 415 458 462 u|373 373 413 415 450 u|382 335 340 415 417 u|390 255 300 342 345 u|397 280 303 313 340 d|407 290 310 337 345 d|414 320 337 355 360 d|425 325 340 355 372 u
433 327 342 493 495 d|441 485 493 547 583 d|450 460 542 560 602 d|457 450 477 560 590 u|467 385 430 480 510 u|474 355 372 430 435 u|483 260 370 377 445 d|491 185 287 375 378 u
500 283 287 373 430 d|508 337 370 490 493 d|517 400 470 495 517 u|525 272 290 470 505 u|535 185 225 287 290 u|541 205 225 263 265 d|551 203 237 265 308 u|560 75 103 238 258 u
568 43 68 103 115 u|577 55 63 78 147 d|585 0 60 75 78 u|593 28 60 72 125 d|602 63 75 135 143 d|610 50 103 137 143 u|618 -5 10 103 108 u|626 0 10 97 120 d
635 60 80 95 137 u|643 55 83 140 175 d|651 -75 -22 135 150 u` },
    { x: 480, y: 160, candles: `
91 122 245 640 655 u|98 92 118 245 290 u|107 0 115 119 280 u|116 15 110 190 215 d|124 30 105 190 283 u|133 25 92 105 138 u|141 25 88 122 160 d|151 80 122 235 325 d
157 70 80 233 238 u|167 65 80 187 222 d|175 158 185 252 305 d|184 170 207 250 270 u|191 138 205 282 328 d|202 180 280 295 298 d|209 240 287 292 345 u|217 225 240 290 315 u
225 175 190 240 243 u|233 183 190 210 240 d|243 153 210 250 253 d|251 243 250 302 310 d|260 233 290 312 318 u|268 280 290 317 327 d|277 248 302 317 330 u|284 295 302 375 380 d
292 320 330 375 377 u|301 310 332 335 350 d|311 330 335 485 507 d|318 400 408 487 490 u|327 383 407 450 470 d|335 388 430 450 453 u|343 427 430 507 522 d|352 458 480 507 525 u
360 460 480 505 530 d|370 480 503 530 535 d|377 520 530 540 555 u|387 420 423 472 510 d|394 455 470 507 510 d|402 478 492 507 513 u|411 445 460 503 515 u|419 455 457 518 520 d
428 483 517 520 533 d|437 430 450 518 525 u|445 425 433 450 490 u|453 430 433 480 500 d|461 465 478 495 510 d|470 460 487 513 515 d|478 480 507 600 603 d|487 535 573 600 605 u
496 563 575 655 660 d|505 608 645 655 700 u|514 605 647 685 697 d|522 605 650 685 690 u|531 590 625 650 655 u|538 600 625 672 690 d|547 595 603 668 672 u|556 585 607 630 685 d
564 548 587 630 635 u|572 572 587 615 618 d|581 600 613 643 645 d|589 630 643 687 690 d|597 685 687 747 777 d|606 690 723 758 790 d|614 690 757 760 800 u|623 655 685 760 810 u
631 620 650 687 712 u|640 610 637 650 700 d|648 605 630 637 675 u|657 590 625 635 645 d|664 575 605 627 632 u|673 588 600 605 615 u|681 525 530 600 605 u|690 405 452 530 533 u
697 395 450 454 480 u|708 435 450 543 545 d|715 455 500 545 548 u|724 490 500 543 545 d` },
    { x: 680, y: 260, candles: `
133 130 163 243 250 u|141 103 163 207 210 d|150 195 198 345 347 d|157 320 345 415 430 d|167 370 417 422 450 d|174 350 422 450 475 d|183 430 443 503 540 d|191 385 470 503 520 u
200 455 470 597 600 d|207 465 503 600 615 u|217 455 500 505 540 u|225 462 503 527 533 d|233 457 485 525 605 u|242 452 480 485 490 u|251 325 327 478 480 u|258 285 323 328 420 u
267 278 313 345 350 d|277 330 337 345 435 u|284 295 337 400 403 d` }
];

sessions.forEach(s => {
    s.candles.trim().split(/[|\n]/).forEach(line => {
        const part = line.split(' ');
        const [x, high, top, bottom, low] = part.slice(0, 5).map(Number);
        const dir = part[5] === 'u' ? 'up' : 'down';
        const px = s.x + x / 3;
        const py = v => s.y + v / 3;
        draw('candles', 'path', { class: 'wick-' + dir, d: `M${px} ${py(high)}V${py(low)}` });
        draw('candles', 'rect', { class: 'body-' + dir, x: px - 1.2, y: py(top), width: 2.4, height: Math.max(1, (bottom - top) / 3) });
    });
});

// Moving averages, same units as the sessions
const averages = {
    slow: [
        [44, 320, '10 502 40 493 65 488 95 503 115 530 130 553 170 578 210 582 245 587 275 597 310 590 330 577 355 572 385 572 410 550 435 515 465 495 485 482 510 490 535 492 570 473 600 452 635 452 660 460 690 495 730 550'],
        [290, 380, '5 371 50 368 80 362 110 356 150 363 220 378 260 408 310 423 370 427 400 413 425 407 460 423 500 413 515 415 550 393 585 350 620 315 648 288 665 240 685 175 703 120'],
        [480, 160, '133 780 170 695 220 600 260 545 300 513 335 505 380 506 420 504 460 499 490 505 520 525 575 545 620 575 665 588 700 580 735 567'],
        [680, 260, '155 273 170 285 200 318 240 340 290 345']
    ],
    fast: [
        [44, 320, '0 337 20 358 45 377 65 385 80 420 97 455 115 530 130 590 150 620 175 633 205 623 235 613 250 620 272 632 300 620 320 600 335 573 350 562 370 570 385 570 400 530 420 470 435 432 460 412 480 397 500 420 520 453 535 458 547 450 570 425 590 395 605 388 630 403 655 427 670 475 690 530 710 600 730 641 745 625'],
        [290, 380, '15 440 40 425 70 402 110 363 150 380 200 390 225 405 255 452 275 461 310 470 350 463 373 455 400 415 425 402 440 420 457 437 475 430 495 410 515 420 545 370 570 300 585 260 605 235 625 200 648 178 655 130'],
        [480, 160, '85 780 100 690 115 610 135 510 155 430 180 375 210 350 230 318 250 310 295 315 330 355 375 412 400 435 430 450 465 460 500 505 540 560 575 573 600 610 620 632 645 638 680 610 700 590 735 570'],
        [680, 260, '140 270 155 280 175 310 192 340']
    ]
};

for (const name in averages) {
    let points = [];
    averages[name].forEach(([ox, oy, data]) => {
        const v = data.split(' ').map(Number);
        for (let i = 0; i < v.length; i += 2) points.push([ox + v[i] / 3, oy + v[i + 1] / 3]);
    });
    // Smooth through the midpoints
    let d = `M${points[0]}`;
    for (let i = 1; i < points.length - 1; i++) {
        const mid = [(points[i][0] + points[i + 1][0]) / 2, (points[i][1] + points[i + 1][1]) / 2];
        d += `Q${points[i]} ${mid}`;
    }
    d += `L${points[points.length - 1]}`;
    draw('averages', 'path', { class: 'average-' + name, d });
}

// Price scale
const ticks = { '1,16100': 130, '1,16050': 168, '1,16000': 204, '1,15950': 242, '1,15900': 279, '1,15850': 317, '1,15800': 354,
    '1,15700': 428, '1,15650': 466, '1,15600': 503, '1,15500': 578, '1,15450': 615, '1,15400': 653, '1,15350': 690 };
for (const price in ticks) {
    draw('prices', 'text', { class: 'tick', x: 7, y: ticks[price] + 3 }, price);
}

const tags = [
    ['1,15877', 297, '#e02045'], ['1,15791', 361, '#131722'], ['1,15687', 438, '#006400'], ['1,15622', 487, '#e8264b'],
    ['1,15553', 539, '#7b7d86'], ['1,15475', 597, '#14a577'], ['1,15436', 626, '#14a577'], ['1,15336', 701, '#e010e0']
];
draw('prices', 'rect', { class: 'tag', x: 0, y: 386, width: 44, height: 25, fill: '#0f0f0f' });
draw('prices', 'text', { class: 'tag-text', x: 7, y: 396 }, '1,15749');
draw('prices', 'text', { class: 'tag-text', x: 7, y: 407 }, '05:16');
tags.forEach(([price, y, fill]) => {
    const tall = price === '1,15791' ? 2 : 0;
    draw('prices', 'rect', { class: 'tag', x: 0, y: y - 6 - tall, width: 44, height: 13 + tall * 2, fill });
    draw('prices', 'text', { class: 'tag-text', x: 7, y: y + 3 }, price);
});
draw('prices', 'rect', { class: 'tag', x: 46, y: 291, width: 3, height: 12, fill: '#e02045' });
draw('prices', 'rect', { class: 'tag', x: 46, y: 357, width: 3, height: 12, fill: '#7b7d86' });
draw('prices', 'rect', { class: 'tag', x: 46, y: 591, width: 3, height: 12, fill: '#14a577' });
```
